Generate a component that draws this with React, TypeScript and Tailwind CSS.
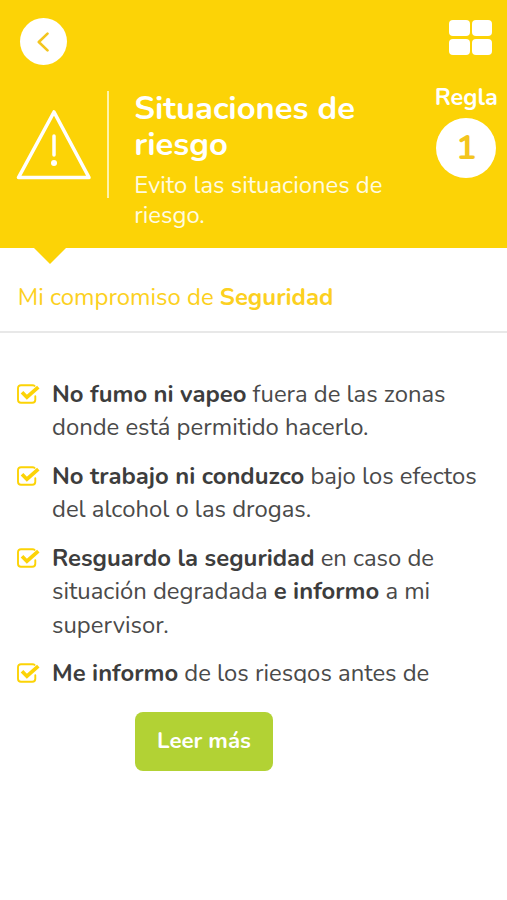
import type { ReactNode } from 'react';

function CheckIcon() {
  return (
    <svg className="mt-[5px] h-6 w-6 shrink-0" viewBox="0 0 24 24" fill="none" stroke="#fcd306" strokeLinecap="round">
      <path d="M18.6 2.9C18 2.3 17.3 2.2 16.5 2.2H5C3.2 2.2 2 3.4 2 5.2V16.8C2 18.6 3.2 19.8 5 19.8H16.3C18.1 19.8 19.3 18.6 19.3 16.8V13.3" strokeWidth="1.9" />
      <path d="M6 9.3L10.9 14.2L22.3 4.2" strokeWidth="3.7" strokeLinecap="butt" />
    </svg>
  );
}

function Item({ children }: { children: ReactNode }) {
  return (
    <li className="mb-[15.4px] flex items-start whitespace-nowrap">
      <CheckIcon />
      <div className="ml-[12px]">{children}</div>
    </li>
  );
}

export default function App() {
  return (
    <main className="h-[900px] w-[507px] overflow-hidden bg-white font-['Nunito','Lato',sans-serif] text-[#4a4a4a]">
      <header className="relative h-[248px] bg-[#fcd306] text-white">
        <div className="flex h-[91px] items-start justify-between pl-5 pr-[15px] pt-[18px]">
          <button className="flex h-[47px] w-[47px] items-center justify-center rounded-full bg-white" aria-label="Volver">
            <svg className="mr-[2px] h-5 w-3" viewBox="0 0 12 20" fill="none" stroke="#f3c51e" strokeWidth="2.6" strokeLinecap="round" strokeLinejoin="round">
              <path d="M10.5 1.6L1.8 10L10.5 18.4" />
            </svg>
          </button>
          <button className="mt-[2px] grid grid-cols-2 gap-x-[2px] gap-y-[3px]" aria-label="Menú">
            <span className="h-4 w-[20.5px] rounded-[4px] bg-white" />
            <span className="h-4 w-[20.5px] rounded-[4px] bg-white" />
            <span className="h-4 w-[20.5px] rounded-[4px] bg-white" />
            <span className="h-4 w-[20.5px] rounded-[4px] bg-white" />
          </button>
        </div>
        <div className="flex items-start">
          <svg className="ml-4 mt-[18px] h-[72px] w-[76px] shrink-0" viewBox="0 0 76 72" fill="none" stroke="white" strokeLinecap="round">
            <path d="M38 3L73 68.5H2.5Z" strokeWidth="3.6" strokeLinejoin="round" />
            <path d="M38 27V46" strokeWidth="3.5" />
            <circle cx="38" cy="54" r="3" fill="white" stroke="none" />
          </svg>
          <div className="ml-[15px] h-[107px] w-[2px] shrink-0 bg-[#fff3a9]" />
          <div className="ml-[25.3px] w-[290px] shrink-0 whitespace-nowrap">
            <h1 className="text-[32.8px] font-bold leading-9">
              <span className="block">Situaciones de</span>
              <span className="block">riesgo</span>
            </h1>
            <p className="mt-[7px] text-[23.85px] leading-[30px] text-[#fffbe0]">
              <span className="block">Evito las situaciones de</span>
              <span className="block">riesgo.</span>
            </p>
          </div>
          <div className="-mt-[9px] ml-[11px] flex w-[62px] shrink-0 flex-col items-center">
            <span className="text-[23.5px] font-bold leading-[30px]">Regla</span>
            <span className="mt-[6px] flex h-[60px] w-[60px] items-center justify-center rounded-full bg-white text-[34px] font-bold text-[#f3c51e]">1</span>
          </div>
        </div>
        <div className="absolute left-[33px] top-[247px] h-[17px] w-[34px] bg-[#fcd306] [clip-path:polygon(0_0,100%_0,50%_100%)]" />
      </header>
      <section className="h-[85px] whitespace-nowrap border-b-2 border-[#e8e8e8] pl-[17.8px] pt-[33px] text-[23.9px] leading-[33px] text-[#fcd020]">
        Mi compromiso de <strong>Seguridad</strong>
      </section>
      <ul className="h-[350px] overflow-hidden pl-4 pt-[45px] text-[23.85px] leading-[33.3px] [&_strong]:text-[#3d3d3d]">
        <Item>
          <div><strong>No fumo ni vapeo</strong> fuera de las zonas</div>
          <div>donde está permitido hacerlo.</div>
        </Item>
        <Item>
          <div><strong>No trabajo ni conduzco</strong> bajo los efectos</div>
          <div>del alcohol o las drogas.</div>
        </Item>
        <Item>
          <div><strong>Resguardo la seguridad</strong> en caso de</div>
          <div>situación degradada <strong>e informo</strong> a mi</div>
          <div>supervisor.</div>
        </Item>
        <Item>
          <div><strong>Me informo</strong> de los riesgos antes de</div>
        </Item>
      </ul>
      <button className="ml-[135px] mt-[29px] flex h-[59px] w-[138px] items-center justify-center whitespace-nowrap rounded-[8px] bg-[#b2d234] pb-[2px] text-[22.3px] font-bold text-white">Leer más</button>
    </main>
  );
}
